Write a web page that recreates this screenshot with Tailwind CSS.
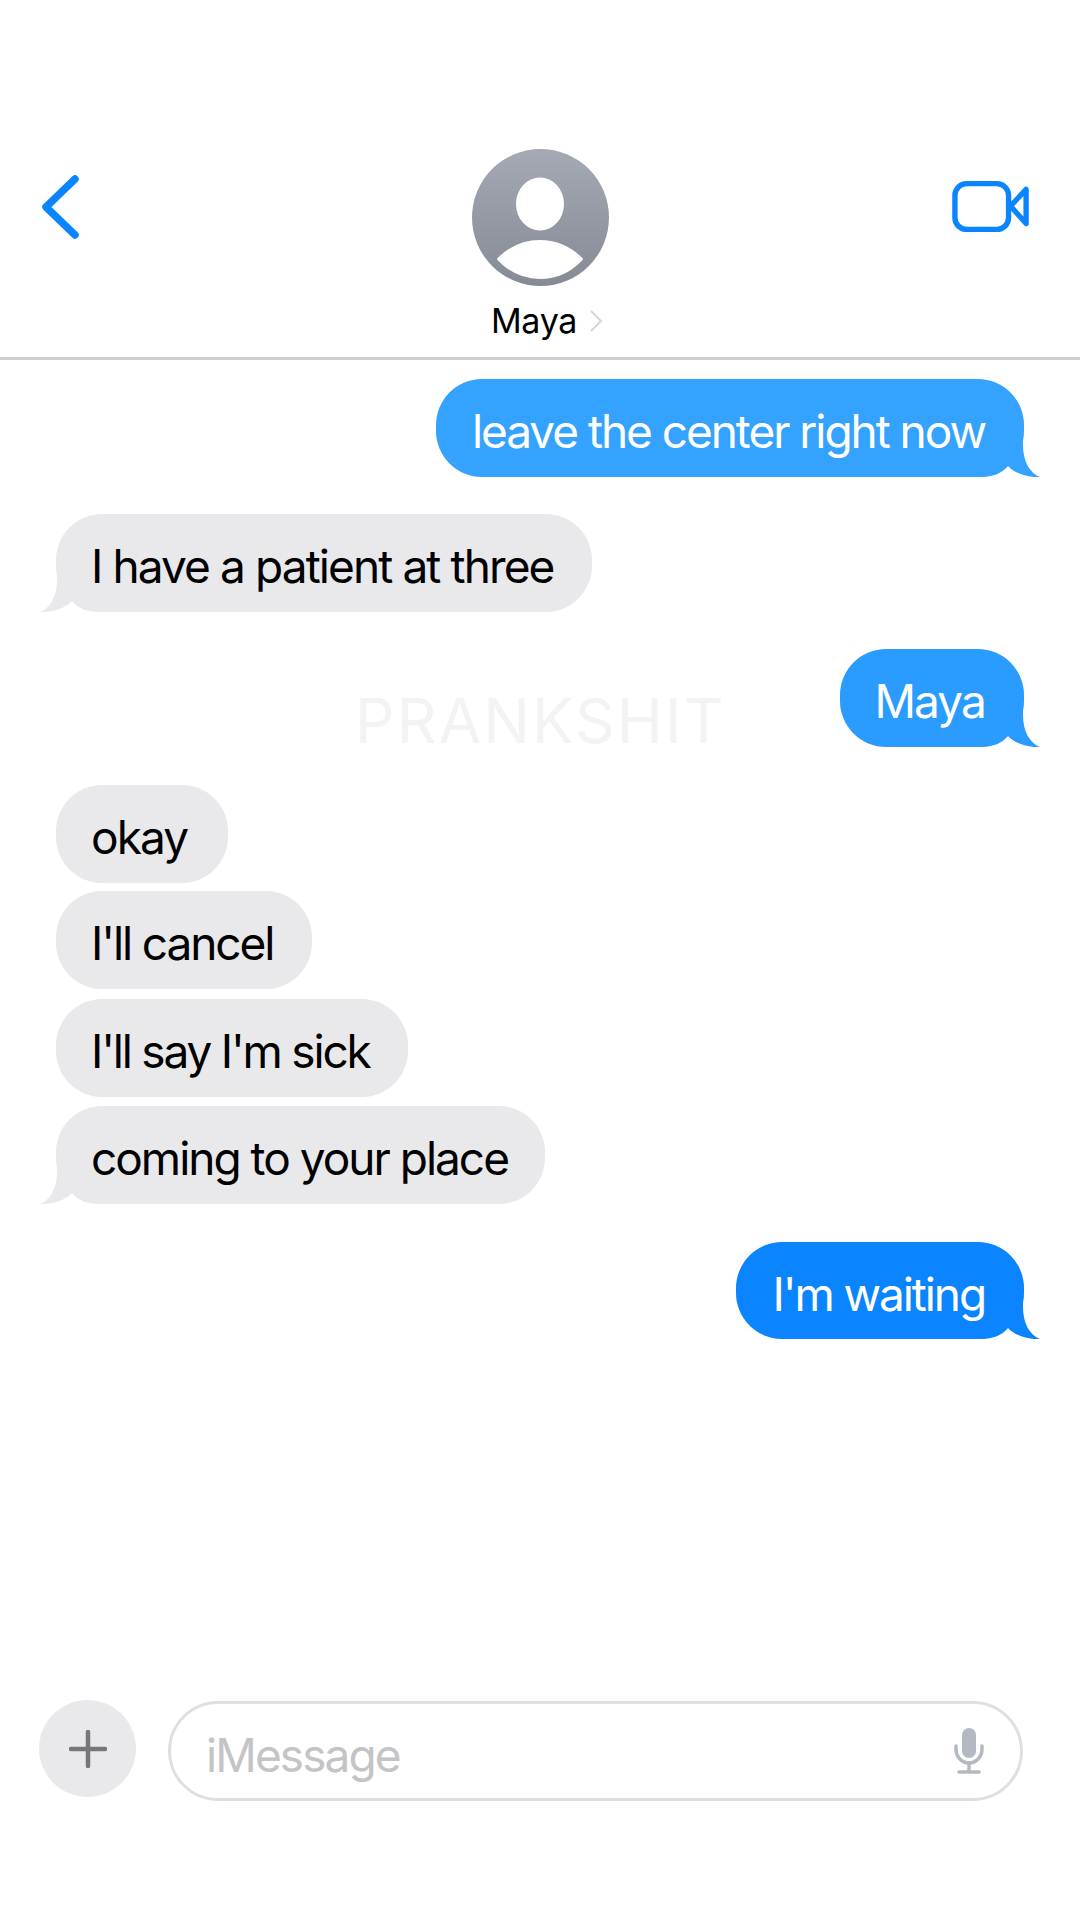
<!DOCTYPE html>
<html lang="en">
<head>
    <meta charset="UTF-8">
    <meta name="viewport" content="width=device-width, initial-scale=1.0">
    <title>Messages | Maya</title>
    <script src="https://cdn.jsdelivr.net/npm/@tailwindcss/browser@4"></script>
</head>
<body class="bg-white">
    <div class="relative w-[1080px] h-[1920px] flex flex-col bg-white font-['Inter',sans-serif] overflow-hidden">

        <!-- Header -->
        <header class="flex justify-between items-start pt-[149px] h-[360px] border-b-[3px] border-[#cfcfcf]">
            <div class="w-[128px] pl-[40px] pt-[25px]">
                <svg width="40" height="66" viewBox="0 0 40 66" fill="none" stroke="#0a84ff" stroke-width="7.5" stroke-linecap="round" stroke-linejoin="round"><path d="M35 5 L6 33 L35 61"/></svg>
            </div>
            <div class="flex flex-col items-center">
                <svg width="137" height="137" viewBox="0 0 137 137">
                    <defs>
                        <linearGradient id="avatarFill" x1="0" y1="0" x2="0" y2="1">
                            <stop offset="0" stop-color="#a5a9b3"/>
                            <stop offset="1" stop-color="#868a95"/>
                        </linearGradient>
                    </defs>
                    <circle cx="68.5" cy="68.5" r="68.5" fill="url(#avatarFill)"/>
                    <ellipse cx="68" cy="55" rx="24" ry="26.5" fill="#fff"/>
                    <path d="M26 110 C38 98 52 92 68 92 C84 92 98 98 110 110 C98 123 84 129 68 129 C52 129 38 123 26 110 Z" fill="#fff" stroke="#fff" stroke-width="2" stroke-linejoin="round"/>
                </svg>
                <div class="flex items-center gap-[12px] mt-[15px] pl-[14px]">
                    <span class="text-[34px] leading-[40px] tracking-[-0.3px] text-black">Maya</span>
                    <svg width="14" height="24" viewBox="0 0 14 24" fill="none" stroke="#d6d6d9" stroke-width="2"><path d="M2 2 L12 12 L2 22"/></svg>
                </div>
            </div>
            <div class="w-[128px] flex justify-end pr-[50px] pt-[29px]">
                <svg width="80" height="58" viewBox="0 0 80 58" fill="none" stroke="#0a84ff" stroke-width="5.5" stroke-linejoin="round">
                    <rect x="3" y="5" width="55" height="47" rx="12"/>
                    <path d="M60 28 L76 11 V46 Z"/>
                </svg>
            </div>
        </header>

        <!-- Watermark -->
        <div class="absolute left-[355px] top-[685px] text-[62px] leading-[72px] font-normal tracking-[2px] text-[#f3f3f3]">PRANKSHIT</div>

        <!-- Conversation -->
        <main class="flex flex-col pt-[19px] px-[56px] text-[46px] leading-[105px] tracking-[-1.9px]">
            <div class="relative self-end h-[98px] pl-[36px] pr-[39px] rounded-[46px] bg-[#34a2ff] text-white tracking-[-2.05px]">
                <svg class="absolute right-[-16px] bottom-0 text-[#34a2ff]" width="60" height="40" viewBox="0 0 60 40" fill="currentColor"><path d="M0 40 C14 40 22 36 28 29 C34 36 48 41 60 40 C50 36 43 25 43 8 L43 0 L0 0 Z"/></svg>
                <span class="relative">leave the center right now</span>
            </div>
            <div class="relative self-start h-[98px] mt-[37px] pl-[35px] pr-[38px] rounded-[46px] bg-[#e9e9eb] text-black">
                <svg class="absolute left-[-16px] bottom-0 text-[#e9e9eb] -scale-x-100" width="60" height="40" viewBox="0 0 60 40" fill="currentColor"><path d="M0 40 C14 40 22 36 28 29 C34 36 48 41 60 40 C50 36 43 25 43 8 L43 0 L0 0 Z"/></svg>
                <span class="relative">I have a patient at three</span>
            </div>
            <div class="relative self-end h-[98px] mt-[37px] pl-[34px] pr-[39px] rounded-[46px] bg-[#2a9cff] text-white">
                <svg class="absolute right-[-16px] bottom-0 text-[#2a9cff]" width="60" height="40" viewBox="0 0 60 40" fill="currentColor"><path d="M0 40 C14 40 22 36 28 29 C34 36 48 41 60 40 C50 36 43 25 43 8 L43 0 L0 0 Z"/></svg>
                <span class="relative">Maya</span>
            </div>
            <div class="self-start h-[98px] mt-[38px] pl-[35px] pr-[41px] rounded-[46px] bg-[#e9e9eb] text-black">okay</div>
            <div class="self-start h-[98px] mt-[8px] pl-[35px] pr-[39px] rounded-[46px] bg-[#e9e9eb] text-black tracking-[-2.1px]">I'll cancel</div>
            <div class="self-start h-[98px] mt-[10px] pl-[35px] pr-[38px] rounded-[46px] bg-[#e9e9eb] text-black tracking-[-2.2px]">I'll say I'm sick</div>
            <div class="relative self-start h-[98px] mt-[9px] pl-[35px] pr-[37px] rounded-[46px] bg-[#e9e9eb] text-black tracking-[-2px]">
                <svg class="absolute left-[-16px] bottom-0 text-[#e9e9eb] -scale-x-100" width="60" height="40" viewBox="0 0 60 40" fill="currentColor"><path d="M0 40 C14 40 22 36 28 29 C34 36 48 41 60 40 C50 36 43 25 43 8 L43 0 L0 0 Z"/></svg>
                <span class="relative">coming to your place</span>
            </div>
            <div class="relative self-end h-[97px] mt-[38px] pl-[37px] pr-[39px] rounded-[46px] bg-[#0a84ff] text-white tracking-[-2.1px]">
                <svg class="absolute right-[-16px] bottom-0 text-[#0a84ff]" width="60" height="40" viewBox="0 0 60 40" fill="currentColor"><path d="M0 40 C14 40 22 36 28 29 C34 36 48 41 60 40 C50 36 43 25 43 8 L43 0 L0 0 Z"/></svg>
                <span class="relative">I'm waiting</span>
            </div>
        </main>

        <!-- Input bar -->
        <footer class="mt-auto flex items-center gap-[32px] pl-[39px] pr-[57px] pb-[119px]">
            <div class="w-[97px] h-[97px] mb-[4px] shrink-0 rounded-full bg-[#e9e9eb] flex items-center justify-center">
                <svg width="38" height="38" viewBox="0 0 38 38" stroke="#76777b" stroke-width="4.5" stroke-linecap="round"><path d="M19 2 V36 M2 19 H36"/></svg>
            </div>
            <div class="flex-1 h-[100px] rounded-[50px] border-[3px] border-[#dfdfe2] flex items-center justify-between pl-[35px] pr-[36px]">
                <span class="text-[46px] tracking-[-1.9px] text-[#c4c4c6] pt-[9px]">iMessage</span>
                <svg width="30" height="46" viewBox="0 0 30 46" fill="none" stroke="#b3b8c2">
                    <rect x="8" y="0" width="14" height="30" rx="7" fill="#b3b8c2" stroke="none"/>
                    <path d="M2 18 V21 C2 29 8 35 15 35 C22 35 28 29 28 21 V18" stroke-width="3.5" stroke-linecap="round"/>
                    <path d="M15 35 V43 M5 44 H25" stroke-width="3.5" stroke-linecap="round"/>
                </svg>
            </div>
        </footer>
    </div>
</body>
</html>
